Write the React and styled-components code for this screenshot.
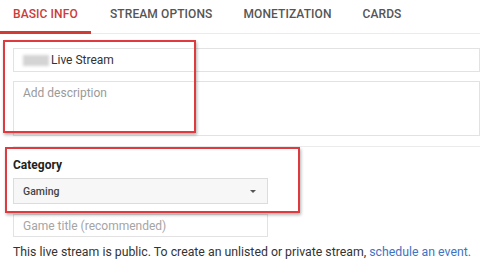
import React from 'react';
import styled, { createGlobalStyle } from 'styled-components';

const GlobalStyle = createGlobalStyle`
  html, body {
    margin: 0;
    padding: 0;
    background: #fff;
  }
  body {
    font-family: Roboto, 'Liberation Sans', Arial, sans-serif;
    color: #333;
  }
`;

const tabs = ['BASIC INFO', 'STREAM OPTIONS', 'MONETIZATION', 'CARDS'];

export default function App() {
  return (
    <>
      <GlobalStyle />
      <Page>
        <TabBar>
          {tabs.map((t, i) => (
            <Tab key={t} $active={i === 0}>
              {t}
            </Tab>
          ))}
        </TabBar>

        <Form>
          <TitleField>
            <Blur />
            <span>Live Stream</span>
          </TitleField>
          <DescField>Add description</DescField>
          <Divider />

          <Label>Category</Label>
          <Select>
            <span>Gaming</span>
            <Caret />
          </Select>
          <SmallField>Game title (recommended)</SmallField>

          <Notice>
            This live stream is public. To create an unlisted or private stream,{' '}
            <Link>schedule an event.</Link>
          </Notice>
        </Form>

        <Highlight $top={40} $left={3} $width={193} $height={93} />
        <Highlight $top={147} $left={5} $width={295} $height={66} />
      </Page>
    </>
  );
}

const Page = styled.div`
  position: relative;
  width: 484px;
  height: 275px;
  overflow: hidden;
`;

const TabBar = styled.div`
  display: flex;
  height: 34px;
  border-bottom: 1px solid #ebebeb;
  box-sizing: border-box;
  margin-right: 4px;
`;

const Tab = styled.div`
  display: flex;
  align-items: center;
  padding: 0 13px 3px 13px;
  margin-right: 5px;
  font-size: 12px;
  font-weight: 500;
  letter-spacing: 0.1px;
  color: ${(p) => (p.$active ? '#cc3b3b' : '#555')};
  border-bottom: 3px solid ${(p) => (p.$active ? '#d23a34' : 'transparent')};
  margin-bottom: -1px;
  white-space: nowrap;
  &:first-child {
    width: 91px;
    box-sizing: border-box;
    margin-right: 6px;
  }
`;

const Form = styled.div`
  padding: 14px 4px 0 13px;
  display: flex;
  flex-direction: column;
`;

const Field = styled.div`
  box-sizing: border-box;
  border: 1px solid #e2e2e2;
  display: flex;
  padding: 0 9px;
  font-size: 12px;
`;

const TitleField = styled(Field)`
  height: 24px;
  align-items: center;
  color: #333;
  gap: 2px;
`;

const Blur = styled.span`
  width: 26px;
  height: 11px;
  background: #d4d4d4;
  filter: blur(1.5px);
`;

const DescField = styled(Field)`
  margin-top: 9px;
  height: 55px;
  padding-top: 4px;
  color: #9a9a9a;
`;

const Divider = styled.div`
  margin-top: 10px;
  height: 1px;
  background: #ebebeb;
`;

const Label = styled.div`
  margin-top: 11px;
  font-size: 12px;
  font-weight: 700;
  color: #222;
  line-height: 14px;
`;

const Select = styled(Field)`
  margin-top: 6px;
  width: 255px;
  height: 26px;
  align-items: center;
  justify-content: space-between;
  background: #f7f7f7;
  border-color: #dcdcdc;
  font-size: 10.5px;
  font-weight: 500;
  color: #444;
`;

const Caret = styled.span`
  width: 0;
  height: 0;
  border-left: 3px solid transparent;
  border-right: 3px solid transparent;
  border-top: 3px solid #555;
  margin-right: 2px;
`;

const SmallField = styled(Field)`
  margin-top: 10px;
  width: 255px;
  height: 23px;
  align-items: center;
  color: #a5a5a5;
`;

const Notice = styled.div`
  margin-top: 8px;
  font-size: 12.3px;
  line-height: 14px;
  color: #333;
  white-space: nowrap;
`;

const Link = styled.span`
  color: #3f73c2;
`;

const Highlight = styled.div`
  position: absolute;
  top: ${(p) => p.$top}px;
  left: ${(p) => p.$left}px;
  width: ${(p) => p.$width}px;
  height: ${(p) => p.$height}px;
  box-sizing: border-box;
  border: 2px solid #dd3b3f;
  box-shadow: 1px 2px 3px rgba(0, 0, 0, 0.3);
  pointer-events: none;
`;
